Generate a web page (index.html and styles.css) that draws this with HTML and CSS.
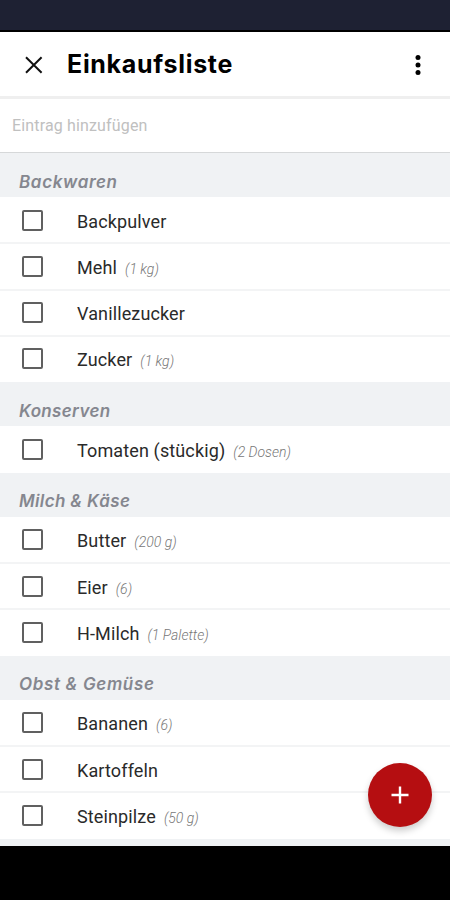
FILE: index.html
```html
<!DOCTYPE html>
<html lang="de">
<head>
<meta charset="utf-8">
<title>Einkaufsliste</title>
<link rel="stylesheet" href="styles.css">
</head>
<body>
<div class="status"></div>
<header class="bar">
  <svg class="close" width="18" height="18" viewBox="0 0 18 18"><path d="M1 1.3L16.6 16.7M16.6 1.3L1 16.7"/></svg>
  <h1>Einkaufsliste</h1>
  <svg class="more" width="6" height="22" viewBox="0 0 6 22"><circle cx="3" cy="3.5" r="2.5"/><circle cx="3" cy="11" r="2.5"/><circle cx="3" cy="18.5" r="2.5"/></svg>
</header>
<div class="add">Eintrag hinzufügen</div>
<main class="list">
  <section>
    <h2 class="wide">Backwaren</h2>
    <div class="row"><i class="box"></i><span class="name">Backpulver</span></div>
    <div class="row"><i class="box"></i><span class="name">Mehl</span><span class="qty">(1 kg)</span></div>
    <div class="row"><i class="box"></i><span class="name">Vanillezucker</span></div>
    <div class="row"><i class="box"></i><span class="name">Zucker</span><span class="qty">(1 kg)</span></div>
  </section>
  <section>
    <h2>Konserven</h2>
    <div class="row"><i class="box"></i><span class="name">Tomaten (stückig)</span><span class="qty">(2 Dosen)</span></div>
  </section>
  <section>
    <h2>Milch &amp; Käse</h2>
    <div class="row"><i class="box"></i><span class="name">Butter</span><span class="qty">(200 g)</span></div>
    <div class="row"><i class="box"></i><span class="name">Eier</span><span class="qty">(6)</span></div>
    <div class="row"><i class="box"></i><span class="name">H-Milch</span><span class="qty">(1 Palette)</span></div>
  </section>
  <section>
    <h2 class="wide">Obst &amp; Gemüse</h2>
    <div class="row"><i class="box"></i><span class="name">Bananen</span><span class="qty">(6)</span></div>
    <div class="row"><i class="box"></i><span class="name">Kartoffeln</span></div>
    <div class="row"><i class="box"></i><span class="name">Steinpilze</span><span class="qty">(50 g)</span></div>
  </section>
</main>
<div class="nav"></div>
<div class="fab"><svg width="18" height="18" viewBox="0 0 18 18"><path d="M9 0.5V17.5M0.5 9H17.5"/></svg></div>
</body>
</html>
```
FILE: styles.css
```css
* { box-sizing: border-box; }
body {
  margin: 0;
  width: 450px;
  height: 900px;
  display: flex;
  flex-direction: column;
  position: relative;
  overflow: hidden;
  background: #fff;
  font-family: Roboto, "Liberation Sans", sans-serif;
}
.status { height: 32px; flex: none; background: #1e2133; border-bottom: 2px solid #000; }
.bar {
  height: 67px;
  flex: none;
  display: flex;
  align-items: center;
  padding: 0 29px 0 25px;
  border-bottom: 3px solid #efefef;
}
.close { stroke: #111; stroke-width: 2; fill: none; margin-top: 2px; }
h1 {
  margin: 0 auto 0 24px;
  font: 700 25px/32px Inter, sans-serif;
  letter-spacing: 0.7px;
  color: #000;
}
.more { fill: #000; margin-top: 2px; }
.add {
  height: 54px;
  flex: none;
  padding-left: 12px;
  font-size: 16px;
  line-height: 53px;
  letter-spacing: 0.15px;
  color: #c0c0c0;
  border-bottom: 1px solid #d6d8d9;
}
.list { height: 692.5px; flex: none; background: #f0f2f4; }
h2 {
  height: 44.1px;
  margin: 0;
  padding: 16.6px 0 0 19px;
  font: italic 600 17px/24px Inter, sans-serif;
  letter-spacing: 0.35px;
  color: #85878f;
}
.wide { letter-spacing: 0.65px; }
.row {
  height: 46.3px;
  display: flex;
  align-items: baseline;
  padding: 12.5px 0 0 22px;
  background: #fff;
}
.row + .row { box-shadow: 0 -1px #f3f4f5, inset 0 1px #f3f4f5; }
.box {
  width: 21px;
  height: 21px;
  margin-right: 34px;
  align-self: flex-start;
  border: 2px solid #606060;
  border-radius: 2px;
}
.name { font-size: 18px; line-height: 24px; letter-spacing: 0.13px; color: #2a2a2a; }
.qty { margin-left: 8px; font-size: 14px; font-style: italic; font-weight: 300; color: #777; }
.nav { flex: 1; background: #000; }
.fab {
  position: absolute;
  left: 368px;
  top: 763px;
  width: 64px;
  height: 64px;
  border-radius: 50%;
  display: flex;
  align-items: center;
  justify-content: center;
  background: #b50e11;
  box-shadow: 0 4px 7px rgba(0, 0, 0, 0.2);
}
.fab svg { stroke: #fff; stroke-width: 2.4; }
```
